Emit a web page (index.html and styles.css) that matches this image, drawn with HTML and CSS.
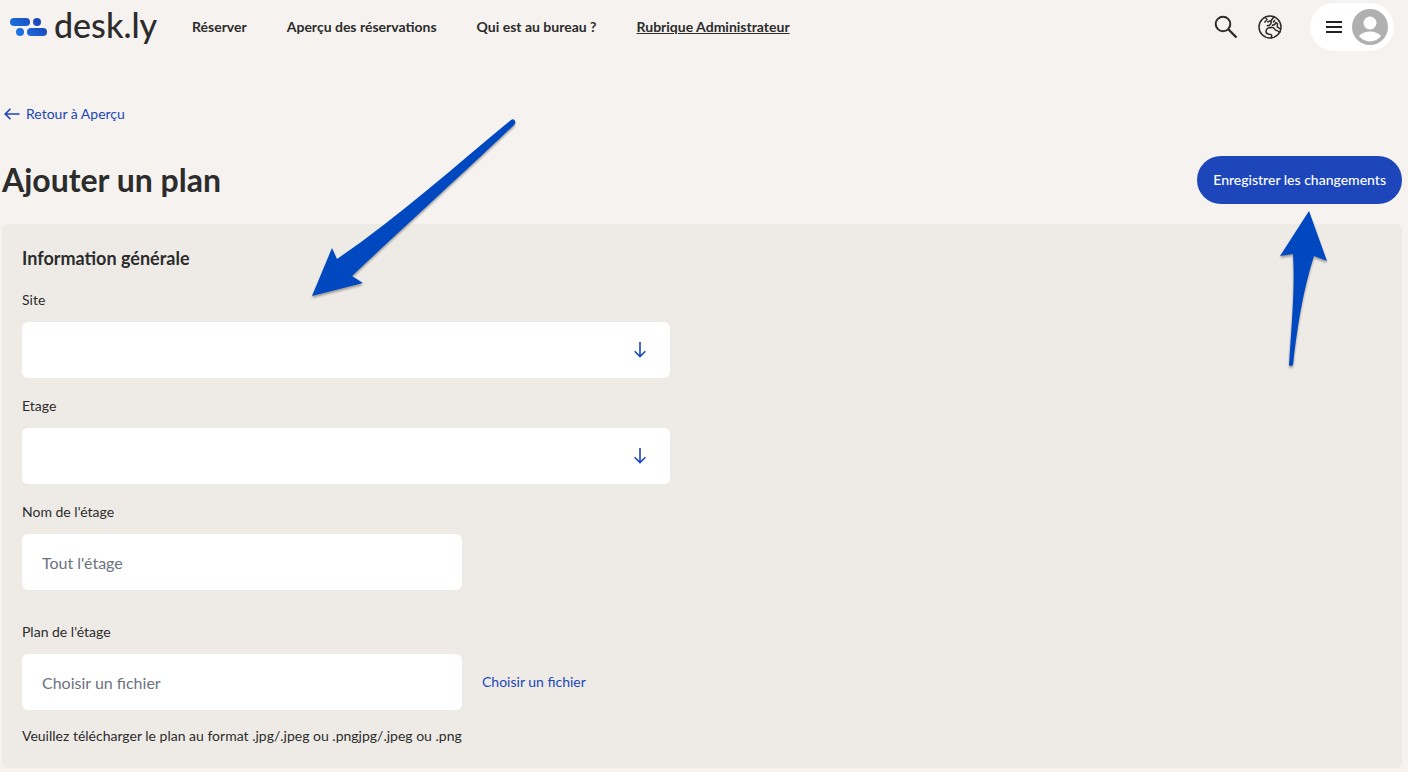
FILE: index.html
```
<!DOCTYPE html>
<html lang="fr">
<head>
    <meta charset="UTF-8">
    <meta name="viewport" content="width=device-width, initial-scale=1">
    <title>desk.ly - Ajouter un plan</title>
    <link rel="stylesheet" href="styles.css">
</head>
<body>
    <header class="header">
        <a class="logo" href="#">
            <svg class="logo-mark" viewBox="0 0 38 18" aria-hidden="true">
                <defs>
                    <linearGradient id="mark" gradientUnits="userSpaceOnUse" x1="24" y1="0" x2="10" y2="18">
                        <stop offset="0" stop-color="#1c46ba"/>
                        <stop offset="1" stop-color="#1a7ae6"/>
                    </linearGradient>
                </defs>
                <g fill="url(#mark)">
                    <rect x="0" y="0" width="20" height="8" rx="4"/>
                    <circle cx="27" cy="4" r="4"/>
                    <circle cx="10" cy="14" r="4"/>
                    <rect x="17" y="10" width="20" height="8" rx="4"/>
                </g>
            </svg>
            <span class="logo-text">desk.ly</span>
        </a>
        <nav class="nav">
            <a href="#">Réserver</a>
            <a href="#">Aperçu des réservations</a>
            <a href="#">Qui est au bureau ?</a>
            <a class="active" href="#">Rubrique Administrateur</a>
        </nav>
        <div class="tools">
            <button class="icon-btn" type="button" aria-label="Rechercher">
                <svg viewBox="0 0 24 24" fill="none" stroke="#2c2c2c">
                    <circle cx="9" cy="9" r="7.3" stroke-width="2"/>
                    <path d="M14.5 14.5l8 8" stroke-width="2.4"/>
                </svg>
            </button>
            <button class="icon-btn" type="button" aria-label="Langue">
                <svg viewBox="0 0 24 24" fill="none" stroke="#2c2c2c" stroke-width="1.5" stroke-linecap="round" stroke-linejoin="round">
                    <circle cx="12" cy="12" r="11"/>
                    <path d="M16 1.700L13 5.700 9.800 6.700M6.800 7l1.400-1.300M8 3.500l1 1M13 5.700c.8 2-.3 3.500-1.500 4.500l-2.200.5M14.500 10.300l2.200-.8L18 7.500l1.500 1.300-.3 3 3.300 2.200M16.500 5.500l-1 1.500"/>
                    <path d="M22 16.800c-1.600.3-2.600-1.500-4-1.600-1.600-.2-1.400-2.700-3.600-2.800-3-.2-6.400 1-6.400 4 0 3.600 3.600 2.200 5 3.200 1.600 1 .4 2 .2 3.300"/>
                </svg>
            </button>
            <button class="account" type="button" aria-label="Menu du compte">
                <svg class="burger" viewBox="0 0 16 12" fill="#222">
                    <rect y="0" width="16" height="2"/>
                    <rect y="5" width="16" height="2"/>
                    <rect y="10" width="16" height="2"/>
                </svg>
                <svg class="avatar" viewBox="0 0 36 36">
                    <circle cx="18" cy="18" r="18" fill="#b0b0b0"/>
                    <circle cx="18" cy="14" r="6.500" fill="#fff"/>
                    <path d="M7 27c2.500-3 6.500-4.500 11-4.500s8.500 1.500 11 4.500c-2.500 3.300-6.500 5.500-11 5.500s-8.500-2.200-11-5.500z" fill="#fff"/>
                </svg>
            </button>
        </div>
    </header>

    <main class="main">
        <a class="back" href="#">
            <svg viewBox="0 0 16 12" fill="none" stroke="currentColor" stroke-width="1.600" aria-hidden="true">
                <path d="M15.500 6H1.500M6.500 .7L1.200 6l5.300 5.300"/>
            </svg>
            Retour à Aperçu
        </a>

        <div class="title-row">
            <h1>Ajouter un plan</h1>
            <button class="save" type="submit" form="plan-form">Enregistrer les changements</button>
        </div>

        <form class="card" id="plan-form">
            <h2>Information générale</h2>

            <div class="field">
                <label for="site">Site</label>
                <div class="select">
                    <select id="site"><option value=""></option></select>
                    <svg viewBox="0 0 12 16" fill="none" stroke="currentColor" stroke-width="1.600" aria-hidden="true">
                        <path d="M6 0v14.500M.7 9.200L6 14.500l5.300-5.300"/>
                    </svg>
                </div>
            </div>

            <div class="field">
                <label for="etage">Etage</label>
                <div class="select">
                    <select id="etage"><option value=""></option></select>
                    <svg viewBox="0 0 12 16" fill="none" stroke="currentColor" stroke-width="1.600" aria-hidden="true">
                        <path d="M6 0v14.500M.7 9.200L6 14.500l5.300-5.300"/>
                    </svg>
                </div>
            </div>

            <div class="field field-name">
                <label for="nom">Nom de l'étage</label>
                <input id="nom" type="text" placeholder="Tout l'étage">
            </div>

            <div class="field">
                <label for="plan">Plan de l'étage</label>
                <div class="file-row">
                    <input id="plan" type="text" placeholder="Choisir un fichier" readonly>
                    <button class="choose" type="button">Choisir un fichier</button>
                </div>
                <p class="help">Veuillez télécharger le plan au format .jpg/.jpeg ou .pngjpg/.jpeg ou .png</p>
            </div>
        </form>
    </main>

    <!-- flèches du guide -->
    <svg class="arrow arrow-form" viewBox="0 0 206 180" aria-hidden="true">
        <path d="M201 1Q204 -1 205 2Q206 4 204 6C160 48 96 106 42 157L53 164L2 177L22 129L27 140C90 97 145 47 201 1z"/>
    </svg>
    <svg class="arrow arrow-save" viewBox="0 0 48 158" aria-hidden="true">
        <path d="M30 1L48 51L35 46C24 80 18 118 14 155Q12 157 10 155C13 110 16 75 14 44L1 46z"/>
    </svg>
</body>
</html>
```
FILE: styles.css
```
* {
    box-sizing: border-box;
}

body {
    position: relative;
    margin: 0;
    background: #f5f2ef;
    color: #2c2c2c;
    font-family: Lato, "Open Sans", sans-serif;
    font-size: 14px;
    line-height: 24px;
}

a {
    color: inherit;
    text-decoration: none;
}

button,
input,
select {
    font: inherit;
    border: 0;
}

button {
    padding: 0;
    background: none;
    color: inherit;
    cursor: pointer;
}

svg {
    display: block;
    flex: none;
}

/* header */
.header {
    display: flex;
    align-items: center;
    height: 54px;
    padding: 0 14px 0 10px;
}

.logo {
    display: flex;
    align-items: center;
    gap: 6px;
    width: 182px;
}

.logo-mark {
    width: 38px;
    height: 18px;
}

.logo-text {
    font-size: 34px;
    font-weight: 500;
    line-height: 48px;
    padding-bottom: 4px;
}

.nav {
    display: flex;
    gap: 40px;
    font-weight: bold;
}

.nav .active {
    text-decoration: underline;
}

.tools {
    display: flex;
    align-items: center;
    gap: 20px;
    margin-left: auto;
}

.icon-btn svg {
    width: 24px;
    height: 24px;
}

.account {
    display: flex;
    align-items: center;
    gap: 10px;
    height: 48px;
    margin-left: 8px;
    padding: 0 6px 0 16px;
    border-radius: 24px;
    background: #fff;
}

.burger {
    width: 16px;
    height: 12px;
}

.avatar {
    width: 36px;
    height: 36px;
}

/* content */
.main {
    padding: 48px 6px 4px 2px;
}

.back {
    display: inline-flex;
    align-items: center;
    gap: 6px;
    padding-left: 2px;
    color: #1c46ba;
}

.back svg {
    width: 16px;
    height: 12px;
}

.title-row {
    display: flex;
    align-items: center;
    justify-content: space-between;
    margin: 29px 0 20px;
}

h1 {
    margin: 0;
    font-size: 32px;
    line-height: 48px;
}

.save {
    height: 48px;
    padding: 0 16px;
    border-radius: 24px;
    background: #1c46ba;
    color: #fff;
    font-weight: 500;
}

.card {
    padding: 20px;
    border-radius: 6px;
    background: #eeebe6;
}

h2 {
    margin: 0 0 16px;
    font-size: 18px;
    line-height: 28px;
}

.field {
    margin-bottom: 16px;
}

.field:last-child {
    margin-bottom: 0;
}

.field-name {
    margin-bottom: 30px;
}

.field label {
    display: block;
    margin-bottom: 10px;
}

.field input,
.field select {
    display: block;
    width: 440px;
    max-width: 100%;
    height: 56px;
    padding: 0 20px;
    border-radius: 6px;
    background: #fff;
    color: #2c2c2c;
    font-size: 16px;
}

.field input::placeholder {
    color: #6b7280;
    opacity: 1;
}

.select {
    position: relative;
    width: 648px;
    max-width: 100%;
}

.select select {
    width: 100%;
    appearance: none;
}

.select svg {
    position: absolute;
    top: 20px;
    right: 24px;
    width: 12px;
    height: 16px;
    color: #1c46ba;
    pointer-events: none;
}

.file-row {
    display: flex;
    align-items: center;
    gap: 20px;
}

.choose {
    color: #1c46ba;
}

.help {
    margin: 14px 0 0;
}

/* arrows over the page */
.arrow {
    position: absolute;
    fill: #0048c0;
    overflow: visible;
    filter: drop-shadow(0 2px 1px rgba(0, 0, 0, 0.35));
    pointer-events: none;
}

.arrow-form {
    top: 119px;
    left: 310px;
    width: 206px;
    height: 180px;
}

.arrow-save {
    top: 210px;
    right: 81px;
    width: 48px;
    height: 158px;
}
```
